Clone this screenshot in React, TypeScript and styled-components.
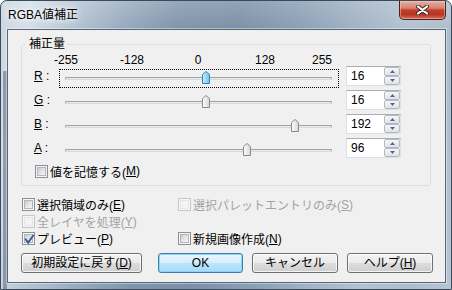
import React from 'react';
import styled, { createGlobalStyle } from 'styled-components';

const FONT = `"Liberation Sans", "Noto Sans CJK JP", sans-serif`;

const GlobalStyle = createGlobalStyle`
  html, body {
    margin: 0;
    padding: 0;
    background: #ffffff;
  }
  body {
    font-family: ${FONT};
    font-size: 12px;
    color: #000000;
  }
`;

const Window = styled.div`
  width: 452px;
  height: 290px;
  box-sizing: border-box;
  display: flex;
  flex-direction: column;
  border: 1px solid #3a4a5b;
  border-radius: 7px 7px 0 0;
  overflow: hidden;
  background:
    linear-gradient(90deg, rgba(0, 0, 0, 0) 2px, rgba(86, 104, 124, 0.55) 2px, rgba(86, 104, 124, 0.55) 6px, rgba(0, 0, 0, 0) 6px) 0 70px / 8px 100% no-repeat,
    linear-gradient(180deg, rgba(255, 255, 255, 0.18), rgba(255, 255, 255, 0) 28px),
    linear-gradient(100deg, #c9d5e0 0%, #d5dfe8 6%, #b9c7d5 14%, #98abbf 25%, #8095ab 36%, #7b90a7 48%, #8a9fb5 60%, #a2b3c5 72%, #b3c2d1 82%, #aebdcc 92%, #b7c4d2 100%);
`;

const TitleBar = styled.div`
  height: 28px;
  flex: none;
  display: flex;
  justify-content: space-between;
  align-items: flex-start;
`;

const Title = styled.div`
  margin: 6px 0 0 7px;
  line-height: 16px;
  font-size: 12px;
  color: #000;
  text-shadow: 0 0 4px #fff, 0 0 8px rgba(255, 255, 255, 0.85), 0 0 12px rgba(255, 255, 255, 0.6);
`;

const CloseButton = styled.div`
  width: 47px;
  height: 19px;
  margin-right: 5px;
  box-sizing: border-box;
  border: 1px solid #4e1f18;
  border-top: none;
  border-radius: 0 0 5px 5px;
  background: linear-gradient(180deg, #e8b0a2 0%, #d7806f 40%, #c2402f 50%, #b83424 75%, #d9705e 100%);
  box-shadow: inset 0 0 0 1px rgba(255, 210, 200, 0.45);
  display: flex;
  align-items: center;
  justify-content: center;
`;

const Client = styled.div`
  flex: 1;
  margin: 0 5px 6px 6px;
  background: #f0f0f0;
  border: 1px solid #56687a;
  box-shadow: 0 0 0 1px rgba(255, 255, 255, 0.4);
  padding: 7px 0 0 13px;
  display: flex;
  flex-direction: column;
`;

const GroupBox = styled.fieldset`
  width: 410px;
  box-sizing: border-box;
  margin: 0;
  padding: 0 0 7px;
  min-width: 0;
  border: 1px solid #d5dfe5;
  border-radius: 3px;
`;

const Legend = styled.legend`
  margin-left: 4px;
  padding: 0 3px;
  line-height: 14px;
  font-size: 12px;
`;

const Scale = styled.div`
  display: flex;
  margin-top: 3px;
  height: 12px;
  line-height: 12px;
`;

const Tick = styled.span<{ $gap: number }>`
  width: 40px;
  margin-left: ${({ $gap }) => $gap}px;
  text-align: center;
`;

const SliderRow = styled.div`
  display: flex;
  align-items: flex-start;
  height: 20px;
  padding-left: 12px;

  & + & {
    margin-top: 4px;
  }
`;

const ChannelLabel = styled.div`
  width: 25px;
  line-height: 20px;
`;

const Slider = styled.div<{ $focused?: boolean }>`
  position: relative;
  width: 280px;
  height: 19px;
  margin-top: 3px;
  box-sizing: border-box;
  border: 1px dotted ${({ $focused }) => ($focused ? '#000' : 'transparent')};
`;

const Track = styled.div`
  height: 3px;
  margin: 7px 6px 0 5px;
  box-sizing: border-box;
  border: 1px solid #b9b9b9;
  border-top-color: #a2a2a2;
  border-bottom-color: #dadada;
  background: #e7eaea;
`;

const Thumb = styled.svg`
  position: absolute;
  top: 1px;
  width: 8px;
  height: 13px;
`;

const SpinEdit = styled.div`
  display: flex;
  width: 55px;
  height: 20px;
  margin-left: 7px;
  box-sizing: border-box;
  border: 1px solid #dbdfe6;
  border-top-color: #abadb3;
  background: #fff;
`;

const EditText = styled.div`
  flex: 1;
  padding-left: 4px;
  line-height: 18px;
`;

const SpinButtons = styled.div`
  display: flex;
  flex-direction: column;
  width: 16px;
`;

const SpinButton = styled.div`
  height: 9px;
  box-sizing: border-box;
  border: 1px solid #b4b9c1;
  border-radius: 2px;
  background: linear-gradient(180deg, #f7f7f7, #e2e2e2);
  display: flex;
  align-items: center;
  justify-content: center;
`;

const CheckRow = styled.label<{ $disabled?: boolean; $indent?: number }>`
  display: flex;
  align-items: center;
  height: 17px;
  margin-left: ${({ $indent }) => $indent ?? 0}px;
  color: ${({ $disabled }) => ($disabled ? '#a3a3a3' : '#000')};
  white-space: nowrap;
`;

const MemoRow = styled(CheckRow)`
  height: 14px;
  margin-top: 6px;
`;

const Box = styled.span<{ $disabled?: boolean }>`
  position: relative;
  flex: none;
  width: 13px;
  height: 13px;
  box-sizing: border-box;
  margin-right: 2px;
  border: 1px solid ${({ $disabled }) => ($disabled ? '#c7c7c7' : '#8e8f8f')};
  background: #f6f6f6;

  &::after {
    content: '';
    position: absolute;
    inset: 1px;
    border: 1px solid ${({ $disabled }) => ($disabled ? '#e6e6e6' : '#b2b6bc')};
    background: ${({ $disabled }) =>
      $disabled ? '#f4f4f4' : 'linear-gradient(135deg, #c8ccd2 0%, #e6e8ea 60%, #f6f6f6 100%)'};
  }

  svg {
    position: absolute;
    left: 0;
    top: 0;
    z-index: 1;
  }
`;

const Options = styled.div`
  display: grid;
  grid-template-columns: 156px auto;
  margin: 10px 0 0 1px;
`;

const ButtonRow = styled.div`
  display: flex;
  margin-top: 6px;
`;

const Button = styled.div<{ $primary?: boolean; $w: number; $gap: number }>`
  width: ${({ $w }) => $w}px;
  height: 20px;
  margin-left: ${({ $gap }) => $gap}px;
  box-sizing: border-box;
  border: 1px solid ${({ $primary }) => ($primary ? '#3c7fb1' : '#707070')};
  border-radius: 3px;
  background: ${({ $primary }) =>
    $primary
      ? 'linear-gradient(180deg, #e9f6fd 0%, #d4eefb 50%, #bde6fd 50%, #a7d9f5 100%)'
      : 'linear-gradient(180deg, #f2f2f2 0%, #ebebeb 50%, #dddddd 50%, #cfcfcf 100%)'};
  box-shadow: inset 0 0 0 1px ${({ $primary }) => ($primary ? '#8fd4f6' : 'rgba(255, 255, 255, 0.75)')};
  display: flex;
  align-items: center;
  justify-content: center;
  line-height: 18px;
`;

const U = styled.span`
  text-decoration: underline;
`;

const ticks: [string, number][] = [
  ['-255', 24],
  ['-128', 26],
  ['0', 26],
  ['128', 27],
  ['255', 17],
];

const channels = [
  { key: 'R', value: 16, focused: true },
  { key: 'G', value: 16 },
  { key: 'B', value: 192 },
  { key: 'A', value: 96 },
];

const ThumbShape = ({ hot, left }: { hot?: boolean; left: number }) => (
  <Thumb viewBox="0 0 8 13" style={{ left }}>
    <defs>
      <linearGradient id={hot ? 'thHot' : 'thNorm'} x1="0" y1="0" x2="1" y2="0">
        <stop offset="0" stopColor={hot ? '#c6ecfb' : '#ffffff'} />
        <stop offset="1" stopColor={hot ? '#6cc3ea' : '#d6d6d6'} />
      </linearGradient>
    </defs>
    <path
      d="M0.5 12.5 V3.5 L4 0.5 L7.5 3.5 V12.5 Z"
      fill={`url(#${hot ? 'thHot' : 'thNorm'})`}
      stroke={hot ? '#2f87b8' : '#8a8a8a'}
      strokeWidth="1"
      strokeLinejoin="round"
    />
  </Thumb>
);

const Arrow = ({ up }: { up?: boolean }) => (
  <svg width="5" height="3" viewBox="0 0 5 3">
    <path d={up ? 'M0 3 L2.5 0 L5 3 Z' : 'M0 0 L2.5 3 L5 0 Z'} fill="#4b67a3" />
  </svg>
);

const CheckMark = () => (
  <svg width="13" height="13" viewBox="0 0 13 13">
    <path d="M2.6 6.2 L5.2 9.6 L10.2 2.4" fill="none" stroke="#3a5294" strokeWidth="1.8" strokeLinecap="round" />
  </svg>
);

const Check = ({
  children,
  checked,
  disabled,
}: {
  children: React.ReactNode;
  checked?: boolean;
  disabled?: boolean;
}) => (
  <CheckRow $disabled={disabled}>
    <Box $disabled={disabled}>{checked && <CheckMark />}</Box>
    {children}
  </CheckRow>
);

export default function App() {
  return (
    <>
      <GlobalStyle />
      <Window>
        <TitleBar>
          <Title>RGBA値補正</Title>
          <CloseButton>
            <svg width="13" height="10" viewBox="0 0 13 10">
              <path d="M2 1.5 L11 8.5 M11 1.5 L2 8.5" stroke="#3a2a28" strokeWidth="4" strokeLinecap="round" />
              <path d="M2 1.5 L11 8.5 M11 1.5 L2 8.5" stroke="#ffffff" strokeWidth="2.2" strokeLinecap="round" />
            </svg>
          </CloseButton>
        </TitleBar>
        <Client>
          <GroupBox>
            <Legend>補正量</Legend>
            <Scale>
              {ticks.map(([label, gap]) => (
                <Tick key={label} $gap={gap}>
                  {label}
                </Tick>
              ))}
            </Scale>
            {channels.map((c) => (
              <SliderRow key={c.key}>
                <ChannelLabel>
                  <U>{c.key}</U> :
                </ChannelLabel>
                <Slider $focused={c.focused}>
                  <Track />
                  <ThumbShape hot={c.focused} left={5 + Math.round(((c.value + 255) / 510) * 258)} />
                </Slider>
                <SpinEdit>
                  <EditText>{c.value}</EditText>
                  <SpinButtons>
                    <SpinButton>
                      <Arrow up />
                    </SpinButton>
                    <SpinButton>
                      <Arrow />
                    </SpinButton>
                  </SpinButtons>
                </SpinEdit>
              </SliderRow>
            ))}
            <MemoRow $indent={13}>
              <Box />
              値を記憶する(<U>M</U>)
            </MemoRow>
          </GroupBox>
          <Options>
            <Check>
              選択領域のみ(<U>E</U>)
            </Check>
            <Check disabled>
              選択パレットエントリのみ(<U>S</U>)
            </Check>
            <Check disabled>
              全レイヤを処理(<U>Y</U>)
            </Check>
            <span />
            <Check checked>
              プレビュー(<U>P</U>)
            </Check>
            <Check>
              新規画像作成(<U>N</U>)
            </Check>
          </Options>
          <ButtonRow>
            <Button $w={121} $gap={0}>
              初期設定に戻す(<U>D</U>)
            </Button>
            <Button $w={85} $gap={16} $primary>
              OK
            </Button>
            <Button $w={86} $gap={9}>
              キャンセル
            </Button>
            <Button $w={86} $gap={9}>
              ヘルプ(<U>H</U>)
            </Button>
          </ButtonRow>
        </Client>
      </Window>
    </>
  );
}
